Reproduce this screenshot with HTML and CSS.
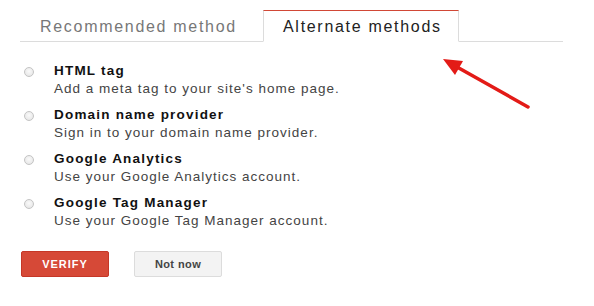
FILE: index.html
```html
<!DOCTYPE html>
<html lang="en">
<head>
    <meta charset="UTF-8">
    <meta name="viewport" content="width=device-width, initial-scale=1.0">
    <title>Verify ownership</title>
    <link rel="stylesheet" href="styles.css">
</head>
<body>
<div class="page">
    <!-- tabs -->
    <div class="tabs">
        <div class="tab">Recommended method</div>
        <div class="tab active">Alternate methods</div>
    </div>

    <!-- methods -->
    <div class="methods">
        <label class="method">
            <span class="radio"></span>
            <span class="method-text">
                <span class="method-title">HTML tag</span>
                <span class="method-desc">Add a meta tag to your site's home page.</span>
            </span>
        </label>
        <label class="method">
            <span class="radio"></span>
            <span class="method-text">
                <span class="method-title">Domain name provider</span>
                <span class="method-desc">Sign in to your domain name provider.</span>
            </span>
        </label>
        <label class="method">
            <span class="radio"></span>
            <span class="method-text">
                <span class="method-title">Google Analytics</span>
                <span class="method-desc">Use your Google Analytics account.</span>
            </span>
        </label>
        <label class="method">
            <span class="radio"></span>
            <span class="method-text">
                <span class="method-title">Google Tag Manager</span>
                <span class="method-desc">Use your Google Tag Manager account.</span>
            </span>
        </label>
    </div>

    <div class="actions">
        <button class="btn btn-verify">VERIFY</button>
        <button class="btn btn-later">Not now</button>
    </div>

    <!-- annotation arrow -->
    <svg class="arrow" width="594" height="306" viewBox="0 0 594 306">
        <line x1="528" y1="107" x2="457" y2="67" stroke="#e31b17" stroke-width="3.5" stroke-linecap="round"/>
        <polygon points="443,59 463,61 455,75" fill="#e31b17"/>
    </svg>
</div>
</body>
</html>
```

FILE: styles.css
```css
body {
    margin: 0;
    background-color: #fff;
    font-family: Arial, "Liberation Sans", sans-serif;
    color: #222;
}
.page {
    position: relative;
    width: 594px;
    height: 306px;
    padding: 10px 0 0 20px;
    box-sizing: border-box;
}
.tabs {
    display: flex;
    width: 543px;
    height: 31px;
    border-bottom: 1px solid #dcdcdc;
}
.tab {
    width: 243px;
    box-sizing: border-box;
    padding-left: 20px;
    font-size: 16px;
    letter-spacing: 1.7px;
    line-height: 31px;
    color: #777;
    border-top: 1px solid transparent;
}
.tab.active {
    width: 196px;
    padding-left: 19px;
    height: 32px;
    color: #222;
    background-color: #fff;
    border: 1px solid #dcdcdc;
    border-top: 1px solid #d14836;
    border-bottom: 1px solid #fff;
}
.methods {
    display: flex;
    flex-direction: column;
    gap: 8px;
    margin-top: 20px;
}
.method {
    display: flex;
    align-items: flex-start;
}
.radio {
    width: 8px;
    height: 8px;
    margin: 5px 20px 0 4px;
    border: 1px solid #c4c4c4;
    border-radius: 50%;
    background: radial-gradient(circle at 50% 40%, #fafafa 0%, #e2e2e2 100%);
}
.method-text {
    display: flex;
    flex-direction: column;
    font-size: 13.5px;
    line-height: 18px;
}
.method-title {
    font-weight: bold;
    letter-spacing: 1.2px;
    color: #111;
}
.method-desc {
    letter-spacing: 1px;
    color: #444;
}
.actions {
    display: flex;
    gap: 25px;
    margin-top: 21px;
    margin-left: 1px;
}
.btn {
    height: 26px;
    width: 88px;
    font-family: Arial, "Liberation Sans", sans-serif;
    font-size: 11px;
    font-weight: bold;
    border-radius: 2px;
    cursor: pointer;
}
.btn-verify {
    background-color: #d64937;
    border: 1px solid #c53727;
    color: #fff;
    letter-spacing: 1px;
}
.btn-later {
    background-color: #f3f3f3;
    border: 1px solid #dcdcdc;
    color: #444;
    letter-spacing: 0.4px;
}
.arrow {
    position: absolute;
    left: 0;
    top: 0;
    pointer-events: none;
}
```
